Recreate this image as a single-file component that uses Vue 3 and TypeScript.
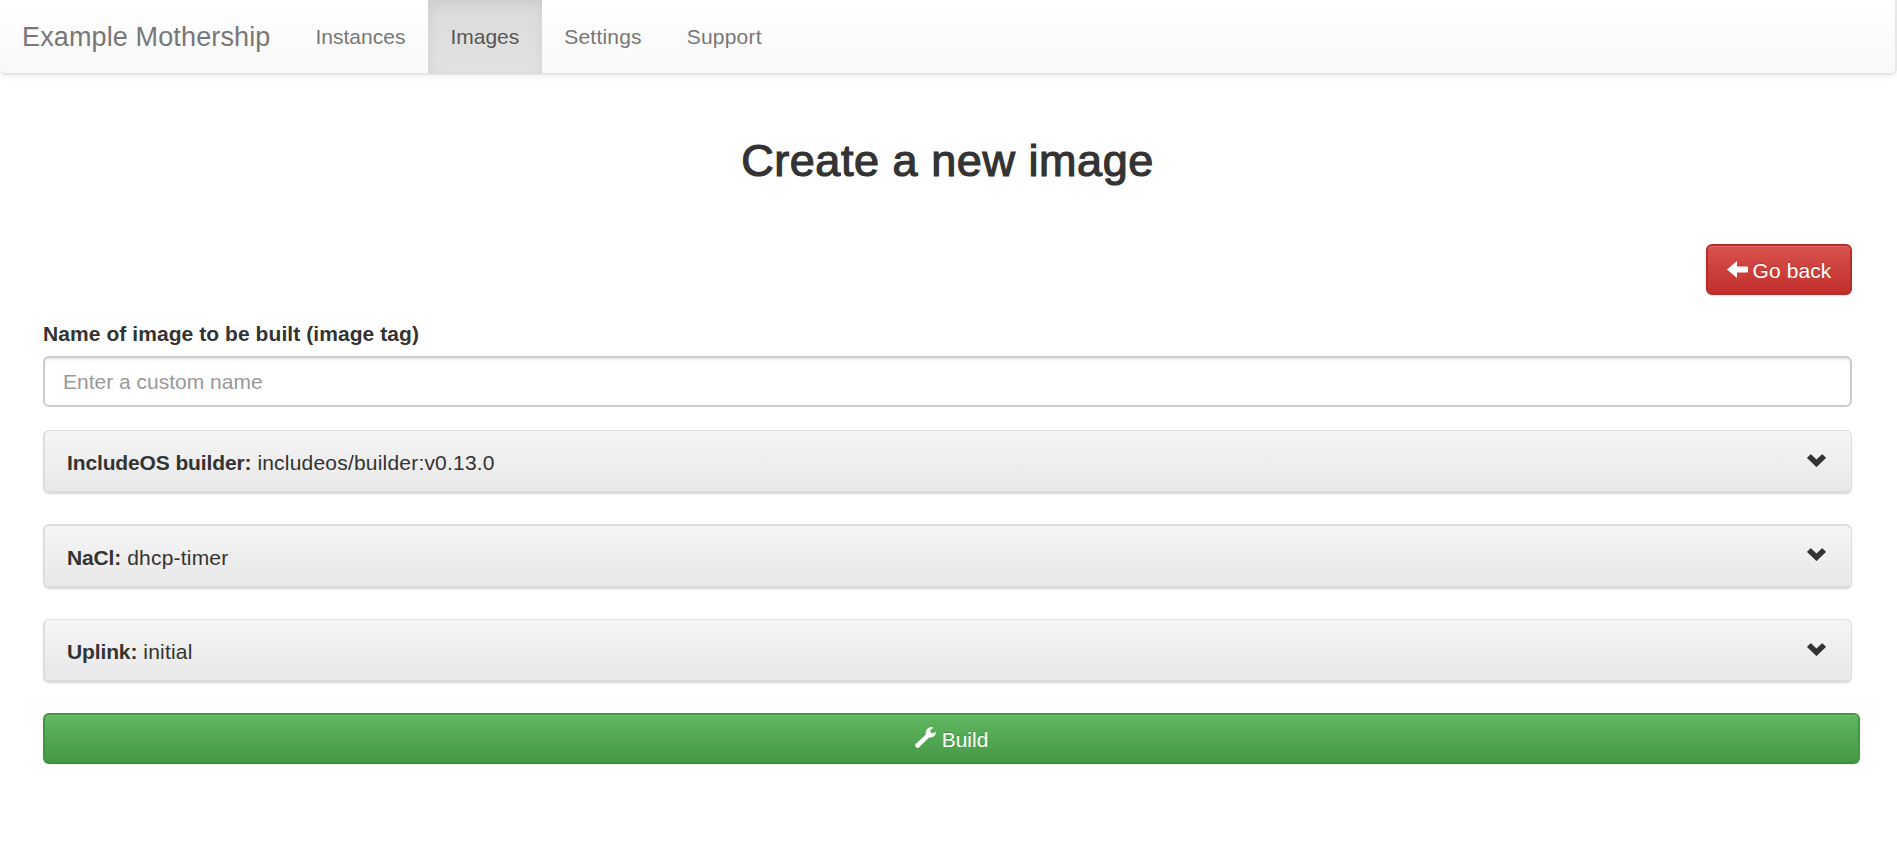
<script setup lang="ts">
interface NavItem {
  label: string
  active: boolean
}

interface Section {
  title: string
  value: string
  tall: boolean
}

const navItems: NavItem[] = [
  { label: 'Instances', active: false },
  { label: 'Images', active: true },
  { label: 'Settings', active: false },
  { label: 'Support', active: false },
]

const sections: Section[] = [
  { title: 'IncludeOS builder:', value: 'includeos/builder:v0.13.0', tall: false },
  { title: 'NaCl:', value: 'dhcp-timer', tall: true },
  { title: 'Uplink:', value: 'initial', tall: false },
]
</script>

<template>
  <div class="page">
    <nav class="navbar">
      <a class="brand"><span class="brand-text">Example Mothership</span></a>
      <a v-for="item in navItems" :key="item.label" class="nav-link" :class="{ active: item.active }">{{ item.label }}</a>
    </nav>

    <main class="content">
      <h2 class="title">Create a new image</h2>

      <div class="actions">
        <button class="btn btn-danger" type="button">
          <svg class="arrow" width="21" height="17" viewBox="0 0 21 17">
            <path d="M0 8.5 10 0V5.5H20Q21 5.5 21 6.5V10.5Q21 11.5 20 11.5H10V17Z" fill="#fff" />
          </svg>
          <span>Go back</span>
        </button>
      </div>

      <label class="label" for="image-tag"><span class="label-text">Name of image to be built (image tag)</span></label>
      <input id="image-tag" class="input" type="text" placeholder="Enter a custom name" />

      <section v-for="s in sections" :key="s.title" class="panel" :class="{ tall: s.tall }">
        <div class="panel-text"><b>{{ s.title }}</b> {{ s.value }}</div>
        <svg class="chevron" width="19" height="13" viewBox="0 0 19 13">
          <path d="M0.3 3.5 3.4 0.4Q3.8 0 4.2 0.4L9.5 5.6 14.8 0.4Q15.2 0 15.6 0.4L18.7 3.5Q19.1 3.9 18.7 4.3L9.9 12.8Q9.5 13.1 9.1 12.8L0.3 4.3Q-0.1 3.9 0.3 3.5Z" fill="#333" />
        </svg>
      </section>

      <button class="btn btn-success" type="button">
        <svg class="wrench" width="21" height="21" viewBox="0 0 21 21">
          <path d="M18.4 0.7 15.2 3.2 15.5 5.6 17.9 6.3 20.9 4.9C21 8 18.8 10.4 16 10.5L14 10.4 4.2 20.3Q2.9 21.5 1.5 20.6L0.5 19.6Q-0.4 18.3 0.7 17L10.8 7.6C10.2 4.6 11.4 1.6 14.3 0.4Q16.4-0.3 18.4 0.7Z" fill="#fff" />
        </svg>
        <span>Build</span>
      </button>
    </main>
  </div>
</template>

<style>
html,
body {
  margin: 0;
  background: #fff;
}
</style>

<style scoped>
.page {
  width: 100%;
  min-height: 862px;
  font-family: "Liberation Sans", Arial, sans-serif;
  font-size: 21px;
  line-height: 30px;
  color: #333;
}

.page * {
  box-sizing: border-box;
}

.navbar {
  display: flex;
  height: 75px;
  border: solid #e7e7e7;
  border-width: 0 2px 2px 0;
  border-radius: 0 0 6px 6px;
  background: linear-gradient(to bottom, #fff 0%, #f8f8f8 100%);
  box-shadow: 0 1px 7px rgba(0, 0, 0, 0.075);
}

.brand,
.nav-link {
  display: flex;
  align-items: center;
  padding: 0 22.5px;
  color: #777;
  text-shadow: 0 1px 0 rgba(255, 255, 255, 0.25);
}

.brand {
  width: 293px;
  padding: 0 0 0 22px;
  font-size: 27px;
  letter-spacing: 0.13px;
  white-space: nowrap;
}

.nav-link:nth-child(n + 4) {
  letter-spacing: 0.2px;
}

.nav-link.active {
  margin-bottom: -1px;
  padding-bottom: 1px;
  color: #555;
  background: linear-gradient(to bottom, #dbdbdb 0%, #e2e2e2 100%);
  box-shadow: inset 0 4px 13px rgba(0, 0, 0, 0.075);
}

.content {
  display: flex;
  flex-direction: column;
  padding: 0 45px 0 43px;
}

.title {
  margin: 61px 0 0;
  font-size: 45px;
  line-height: 50px;
  font-weight: 400;
  letter-spacing: 0.55px;
  text-align: center;
  -webkit-text-stroke: 1.2px #333;
}

.actions {
  display: flex;
  justify-content: flex-end;
  margin-top: 58px;
}

.btn {
  display: flex;
  align-items: center;
  justify-content: center;
  height: 51px;
  padding: 3px 0 0;
  border: 2px solid;
  border-radius: 6px;
  color: #fff;
  font: inherit;
  line-height: 30px;
  text-shadow: 0 -1px 0 rgba(0, 0, 0, 0.2);
  box-shadow: inset 0 1px 0 rgba(255, 255, 255, 0.15), 0 1px 2px rgba(0, 0, 0, 0.075);
}

.btn-danger {
  width: 146px;
  border-color: #b92c28;
  background: linear-gradient(to bottom, #d9534f 0%, #c12e2a 100%) border-box;
  letter-spacing: 0.1px;
}

.btn-success {
  width: 1817px;
  border-color: #419641 #419641 #3e8f3e;
  background: linear-gradient(to bottom, #62b862 0%, #449744 100%) border-box;
}

.arrow {
  margin: -4px 5px 0 0;
}

.wrench {
  margin: -5px 6px 0 0;
}

.label {
  margin-top: 24px;
  height: 30px;
  font-weight: 700;
  letter-spacing: 0.07px;
}

.input {
  height: 51px;
  margin: 7px 0 23px;
  padding: 0 18px;
  border: 2px solid #ccc;
  border-radius: 6px;
  background: #fff;
  color: #555;
  font: inherit;
  box-shadow: inset 0 2px 2px rgba(0, 0, 0, 0.075);
}

.input::placeholder {
  color: #999;
  opacity: 1;
}

.panel {
  display: flex;
  justify-content: space-between;
  align-items: flex-start;
  height: 64px;
  margin-bottom: 30px;
  padding: 17px 25px 0 22px;
  border: solid #ddd;
  border-width: 1px 1px 3px 2px;
  border-radius: 6px;
  background: linear-gradient(to bottom, #f5f5f5 0%, #e8e8e8 100%);
  box-shadow: 0 1px 3px rgba(0, 0, 0, 0.05);
}

.panel.tall {
  height: 65px;
  border-top-width: 2px;
}

.panel-text {
  letter-spacing: 0.2px;
}

.panel-text b {
  letter-spacing: -0.13px;
}

.chevron {
  margin-top: 6px;
}

.panel.tall .chevron {
  margin-top: 5px;
}
</style>
